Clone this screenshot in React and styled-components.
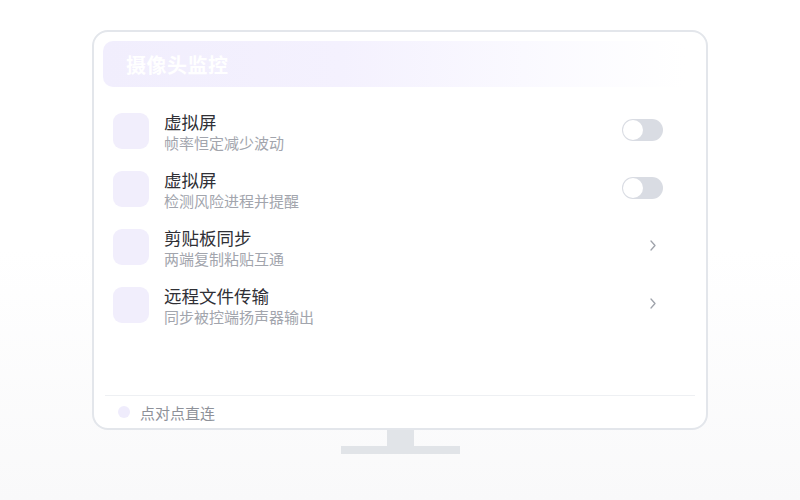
import styled, { createGlobalStyle } from "styled-components";

const GlobalStyle = createGlobalStyle`
  html, body {
    margin: 0;
    padding: 0;
  }
  body {
    width: 800px;
    height: 500px;
    background: linear-gradient(180deg, #ffffff 0%, #ffffff 50%, #f9f9fa 100%);
    font-family: "Noto Sans CJK SC", "Noto Sans", sans-serif;
    overflow: hidden;
  }
`;

const Page = styled.div`
  width: 800px;
  height: 500px;
  padding-top: 30px;
  box-sizing: border-box;
  display: flex;
  flex-direction: column;
  align-items: center;
`;

const Screen = styled.div`
  width: 616px;
  height: 400px;
  box-sizing: border-box;
  border: 2px solid #e3e6eb;
  border-radius: 16px;
  background: #fff;
  padding: 9px 9px 0;
  display: flex;
  flex-direction: column;
`;

const Header = styled.div`
  height: 46px;
  flex-shrink: 0;
  border-radius: 10px;
  background: linear-gradient(90deg, #f1eefd 0%, #f4f1fe 40%, rgba(249, 248, 255, 0.7) 75%, rgba(255, 255, 255, 0) 98%);
  display: flex;
  align-items: center;
  padding-left: 23px;
`;

const Title = styled.h1`
  margin: 0;
  font-size: 20px;
  font-weight: 700;
  color: #ffffff;
  letter-spacing: 0.5px;
`;

const List = styled.div`
  flex: 1;
  margin-top: 15px;
  display: flex;
  flex-direction: column;
`;

const Row = styled.div`
  height: 58px;
  box-sizing: border-box;
  padding: 11px 34px 11px 10px;
  display: flex;
  align-items: flex-start;
  gap: 15px;
`;

const IconBox = styled.div`
  width: 36px;
  height: 36px;
  flex-shrink: 0;
  border-radius: 9px;
  background: #f1eefc;
`;

const Texts = styled.div`
  flex: 1;
  display: flex;
  flex-direction: column;
  margin-top: -2px;
`;

const ItemTitle = styled.div`
  font-size: 17.5px;
  line-height: 22px;
  color: #303036;
`;

const ItemSub = styled.div`
  font-size: 15px;
  line-height: 20px;
  color: #a2a5ad;
`;

const Toggle = styled.div`
  width: 41px;
  height: 22px;
  margin-top: 6px;
  border-radius: 11px;
  background: #d9dce3;
  padding: 1px;
  box-sizing: border-box;
  display: flex;
  align-items: center;
`;

const Knob = styled.div`
  width: 20px;
  height: 20px;
  border-radius: 50%;
  background: #fff;
`;

const Chevron = styled.div`
  margin-top: 11px;
  margin-right: 7px;
  display: flex;
  color: #9fa3ab;
`;

const Footer = styled.div`
  height: 32px;
  flex-shrink: 0;
  margin: 0 2px;
  border-top: 1px solid #eef0f3;
  display: flex;
  align-items: center;
  gap: 10px;
  padding-left: 13px;
`;

const Dot = styled.div`
  width: 12px;
  height: 12px;
  border-radius: 50%;
  background: #efecfc;
`;

const FooterText = styled.span`
  font-size: 15px;
  color: #8e9199;
`;

const Neck = styled.div`
  width: 27px;
  height: 16px;
  background: #e1e4e8;
`;

const Base = styled.div`
  width: 119px;
  height: 8px;
  background: #e1e4e8;
`;

const items = [
  { title: "虚拟屏", sub: "帧率恒定减少波动", kind: "toggle" },
  { title: "虚拟屏", sub: "检测风险进程并提醒", kind: "toggle" },
  { title: "剪贴板同步", sub: "两端复制粘贴互通", kind: "link" },
  { title: "远程文件传输", sub: "同步被控端扬声器输出", kind: "link" },
];

function App() {
  return (
    <>
      <GlobalStyle />
      <Page>
        <Screen>
          <Header>
            <Title>摄像头监控</Title>
          </Header>
          <List>
            {items.map((item, i) => (
              <Row key={i}>
                <IconBox />
                <Texts>
                  <ItemTitle>{item.title}</ItemTitle>
                  <ItemSub>{item.sub}</ItemSub>
                </Texts>
                {item.kind === "toggle" ? (
                  <Toggle>
                    <Knob />
                  </Toggle>
                ) : (
                  <Chevron>
                    <svg width="6" height="11" viewBox="0 0 6 11" fill="none">
                      <path d="M1 1l4 4.5L1 10" stroke="currentColor" strokeWidth="1.3" strokeLinecap="round" strokeLinejoin="round" />
                    </svg>
                  </Chevron>
                )}
              </Row>
            ))}
          </List>
          <Footer>
            <Dot />
            <FooterText>点对点直连</FooterText>
          </Footer>
        </Screen>
        <Neck />
        <Base />
      </Page>
    </>
  );
}

export default App;
